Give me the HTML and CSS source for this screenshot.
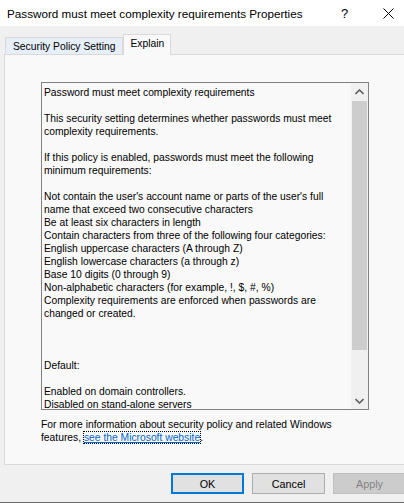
FILE: index.html
```html
<!DOCTYPE html>
<html lang="en">
<head>
  <meta charset="UTF-8" />
  <title>Password must meet complexity requirements Properties</title>
  <link rel="stylesheet" href="styles.css">
</head>
<body>
  <div class="titlebar">
    <span class="title">Password must meet complexity requirements Properties</span>
    <span class="help-btn">?</span>
    <span class="close-btn">
      <svg width="11" height="11" viewBox="0 0 11 11"><path d="M0.5 0.5 L10.5 10.5 M10.5 0.5 L0.5 10.5" stroke="#000" stroke-width="1" fill="none"/></svg>
    </span>
  </div>

  <div class="tabs">
    <div class="tab">Security Policy Setting</div>
    <div class="tab active">Explain</div>
  </div>

  <div class="panel">
    <div class="explain-box">
      <div class="explain-text">Password must meet complexity requirements

This security setting determines whether passwords must meet
complexity requirements.

If this policy is enabled, passwords must meet the following
minimum requirements:

Not contain the user's account name or parts of the user's full
name that exceed two consecutive characters
Be at least six characters in length
Contain characters from three of the following four categories:
English uppercase characters (A through Z)
English lowercase characters (a through z)
Base 10 digits (0 through 9)
Non-alphabetic characters (for example, !, $, #, %)
Complexity requirements are enforced when passwords are
changed or created.



Default:

Enabled on domain controllers.
Disabled on stand-alone servers</div>
      <div class="scrollbar">
        <div class="sb-arrow">
          <svg width="9" height="6" viewBox="0 0 9 6"><path d="M0.5 5 L4.5 1 L8.5 5" stroke="#606060" stroke-width="1.6" fill="none"/></svg>
        </div>
        <div class="sb-thumb"></div>
        <div class="sb-track"></div>
        <div class="sb-arrow">
          <svg width="9" height="6" viewBox="0 0 9 6"><path d="M0.5 1 L4.5 5 L8.5 1" stroke="#606060" stroke-width="1.6" fill="none"/></svg>
        </div>
      </div>
    </div>
    <p class="more-info">For more information about security policy and related Windows<br>features, <a class="link" href="#">see the Microsoft website</a>.</p>
  </div>

  <div class="buttons">
    <button class="btn default">OK</button>
    <button class="btn">Cancel</button>
    <button class="btn" disabled>Apply</button>
  </div>
</body>
</html>
```

FILE: styles.css
```css
html, body {
  margin: 0;
  padding: 0;
}
body {
  width: 404px;
  height: 503px;
  overflow: hidden;
  background: #f0f0f0;
  font-family: "Liberation Sans", Arial, sans-serif;
  font-size: 10.3px;
  color: #000;
  border-bottom: 1px solid #6b6b6b;
  box-sizing: border-box;
}
.titlebar {
  height: 26px;
  background: #fff;
  display: flex;
  align-items: center;
}
.title {
  padding-left: 7px;
  font-size: 11.7px;
  flex: 1;
  white-space: nowrap;
}
.help-btn {
  width: 12px;
  margin-right: 30px;
  font-size: 13px;
}
.close-btn {
  display: flex;
  margin-right: 10px;
}
.tabs {
  height: 28px;
  padding-left: 4px;
  display: flex;
  align-items: flex-end;
}
.tab {
  height: 17px;
  padding: 0 7px;
  line-height: 17px;
  border: 1px solid #d9d9d9;
  border-bottom: none;
  background: #e6eef8;
  margin-left: 1px;
  box-sizing: border-box;
}
.tab.active {
  height: 21px;
  line-height: 18px;
  background: #f9f9f9;
  margin-left: 0;
  margin-bottom: -1px;
  position: relative;
  z-index: 1;
  padding: 0 6px;
}
.panel {
  margin-left: 4px;
  width: 430px;
  height: 411px;
  border: 1px solid #d9d9d9;
  background: #f9f9f9;
  padding: 27px 0 0 36px;
  box-sizing: border-box;
}
.explain-box {
  width: 328px;
  height: 328px;
  border: 1px solid #828282;
  box-sizing: border-box;
  display: flex;
  overflow: hidden;
}
.explain-text {
  flex: 1;
  padding: 3px 0 0 2px;
  white-space: pre;
  line-height: 13px;
  overflow: hidden;
}
.scrollbar {
  width: 17px;
  display: flex;
  flex-direction: column;
  background: #f0f0f0;
}
.sb-arrow {
  height: 17px;
  display: flex;
  align-items: center;
  justify-content: center;
}
.sb-thumb {
  height: 249px;
  margin: 1px 1px 0;
  background: #cdcdcd;
}
.sb-track {
  flex: 1;
}
.more-info {
  margin: 8px 0 0;
  line-height: 13px;
}
.link {
  color: #0066cc;
  text-decoration: underline;
  outline: 1px dotted #000;
}
.buttons {
  display: flex;
  gap: 8px;
  padding: 8px 0 0 171px;
}
.btn {
  width: 73px;
  height: 21px;
  flex-shrink: 0;
  padding: 0;
  font-family: inherit;
  font-size: 10.8px;
  background: #e1e1e1;
  border: 1px solid #adadad;
  color: #000;
}
.btn.default {
  border: 2px solid #0078d7;
}
.btn:disabled {
  background: #cccccc;
  border-color: #bfbfbf;
  color: #838383;
}
```
